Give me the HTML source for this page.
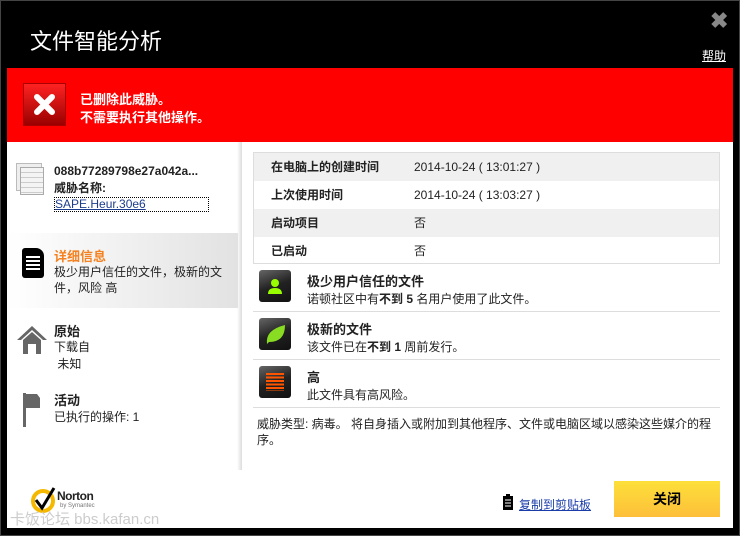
<!DOCTYPE html>
<html><head><meta charset="utf-8"><style>
*{margin:0;padding:0;box-sizing:border-box}
body{width:740px;height:536px;background:#000;font-family:"Liberation Sans","Noto Sans CJK SC",sans-serif;position:relative;overflow:hidden;font-size:12px;color:#222}
.a{position:absolute}
.r{height:28px;position:relative;line-height:28px}
.r b{position:absolute;left:17px;top:0}
.r span{position:absolute;left:160px;top:0}
</style></head><body>
<div class="a" style="left:0;top:0;width:740px;height:536px;border:1px solid #444"></div>
<div class="a" style="left:30px;top:24px;color:#fff;font-size:22px;font-family:'Noto Sans CJK SC',sans-serif">文件智能分析</div>
<div class="a" style="left:710px;top:8px;color:#888;font-size:22px;font-weight:bold">✖</div>
<div class="a" style="left:702px;top:47px;color:#fff;font-size:12px;text-decoration:underline">帮助</div>
<div class="a" style="left:7px;top:68px;width:726px;height:74px;background:#f00"></div>
<div class="a" style="left:23px;top:83px;height:43px;background:linear-gradient(#f22,#900);border:1px solid #a00;width:43px"></div>
<svg class="a" style="left:23px;top:83px" width="43" height="43"><path d="M14 14 L29 29 M29 14 L14 29" stroke="#fff" stroke-width="6" stroke-linecap="round"/></svg>
<div class="a" style="left:80px;top:91px;color:#fff;font-weight:bold;font-size:13px;line-height:18px">已删除此威胁。<br>不需要执行其他操作。</div>
<div class="a" style="left:7px;top:142px;width:726px;height:386px;background:#fff"></div>
<div class="a" style="left:237px;top:142px;width:5px;height:328px;background:linear-gradient(90deg,#fff,#ddd)"></div>
<div class="a" style="left:7px;top:233px;width:231px;height:75px;background:linear-gradient(90deg,#fff,#e2e2e2)"></div>
<div class="a" style="left:16px;top:163px;width:26px;height:28px;border:1px solid #bbb;background:#eee"></div>
<div class="a" style="left:20px;top:167px;width:24px;height:28px;border:1px solid #aaa;background:repeating-linear-gradient(#f4f4f4 0 4px,#ccc 4px 5px)"></div>
<div class="a" style="left:54px;top:163px;font-weight:bold;line-height:17px">088b77289798e27a042a...<br>威胁名称:</div>
<div class="a" style="left:54px;top:197px;width:155px;height:15px;border:1px dotted #000;color:#1c3c8c;text-decoration:underline;line-height:13px">SAPE.Heur.30e6</div>
<div class="a" style="left:22px;top:248px;width:22px;height:30px;background:#000;border-radius:3px 8px 3px 3px"></div>
<div class="a" style="left:26px;top:256px;width:14px;height:14px;background:repeating-linear-gradient(#fff 0 2px,#000 2px 4px)"></div>
<div class="a" style="left:54px;top:246px;color:#f58220;font-weight:bold;font-size:13px">详细信息</div>
<div class="a" style="left:54px;top:264px;line-height:16px;width:175px">极少用户信任的文件，极新的文件，风险 高</div>
<svg class="a" style="left:16px;top:324px" width="32" height="30"><path d="M1 16 L16 2 L31 16 L27 16 L16 6 L5 16Z" fill="#666"/><path d="M7 16 L16 8 L25 16 V30 H20 V20 H12 V30 H7Z" fill="#666"/></svg>
<div class="a" style="left:54px;top:321px;font-weight:bold;font-size:13px">原始</div>
<div class="a" style="left:54px;top:339px;line-height:17px">下载自<br>&nbsp;未知</div>
<svg class="a" style="left:22px;top:393px" width="24" height="34"><rect x="1" y="0" width="3" height="34" fill="#666"/><path d="M4 1 H15 L18 5 V15 H4Z" fill="#666"/></svg>
<div class="a" style="left:54px;top:390px;font-weight:bold;font-size:13px">活动</div>
<div class="a" style="left:54px;top:408px">已执行的操作: 1</div>
<div class="a" style="left:253px;top:152px;width:467px;height:112px;border:1px solid #ddd;font-size:12px">
<div class="r" style="background:#f0f0f0"><b>在电脑上的创建时间</b><span>2014-10-24 ( 13:01:27 )</span></div>
<div class="r"><b>上次使用时间</b><span>2014-10-24 ( 13:03:27 )</span></div>
<div class="r" style="background:#f0f0f0"><b>启动项目</b><span>否</span></div>
<div class="r"><b>已启动</b><span>否</span></div>
</div>
<div class="a" style="left:253px;top:311px;width:467px;height:1px;background:#ddd"></div>
<div class="a" style="left:253px;top:359px;width:467px;height:1px;background:#ddd"></div>
<div class="a" style="left:253px;top:407px;width:467px;height:1px;background:#ddd"></div>
<div class="a" style="left:259px;top:270px;width:32px;height:32px;border-radius:3px;background:linear-gradient(160deg,#666,#222 50%,#111)"></div>
<svg class="a" style="left:259px;top:270px" width="32" height="32"><circle cx="16" cy="13" r="4" fill="#9f0"/><path d="M9 24 Q9 18 16 18 Q23 18 23 24Z" fill="#9f0"/></svg>
<div class="a" style="left:259px;top:318px;width:32px;height:32px;border-radius:3px;background:linear-gradient(160deg,#666,#222 50%,#111)"></div>
<svg class="a" style="left:259px;top:318px" width="32" height="32"><path d="M8 26 Q6 12 26 7 Q26 24 10 24Z" fill="#8d2"/></svg>
<div class="a" style="left:259px;top:366px;width:32px;height:32px;border-radius:3px;background:linear-gradient(160deg,#666,#222 50%,#111)"></div>
<div class="a" style="left:266px;top:373px;width:18px;height:18px;background:repeating-linear-gradient(#f50 0 2px,transparent 2px 3.5px)"></div>
<div class="a" style="left:307px;top:271px;font-weight:bold;font-size:13px">极少用户信任的文件</div>
<div class="a" style="left:307px;top:290px">诺顿社区中有<b>不到 5</b> 名用户使用了此文件。</div>
<div class="a" style="left:307px;top:319px;font-weight:bold;font-size:13px">极新的文件</div>
<div class="a" style="left:307px;top:338px">该文件已在<b>不到 1</b> 周前发行。</div>
<div class="a" style="left:307px;top:367px;font-weight:bold;font-size:13px">高</div>
<div class="a" style="left:307px;top:386px">此文件具有高风险。</div>
<div class="a" style="left:257px;top:416px;width:465px;line-height:16px">威胁类型: 病毒。 将自身插入或附加到其他程序、文件或电脑区域以感染这些媒介的程序。</div>
<svg class="a" style="left:30px;top:486px" width="28" height="28"><circle cx="13" cy="15" r="10" fill="none" stroke="#f5b800" stroke-width="4"/><path d="M6 14 L12 22 L24 2" fill="none" stroke="#000" stroke-width="3"/></svg>
<div class="a" style="left:57px;top:489px;font-weight:bold;font-size:12px;letter-spacing:-.5px">Norton</div>
<div class="a" style="left:60px;top:503px;font-size:6px;color:#777">by Symantec</div>
<div class="a" style="left:10px;top:508px;font-size:15px;color:#ccc">卡饭论坛 bbs.kafan.cn</div>
<svg class="a" style="left:502px;top:494px" width="12" height="17"><rect x="1" y="2" width="10" height="14" fill="#000"/><rect x="4" y="0" width="4" height="3" fill="#000"/><path d="M3 6h6M3 9h6M3 12h6" stroke="#fff"/></svg>
<div class="a" style="left:519px;top:496px;color:#1a3ca8;text-decoration:underline">复制到剪贴板</div>
<div class="a" style="left:614px;top:481px;width:106px;height:36px;background:linear-gradient(#fde03a,#fdbf3a);text-align:center;line-height:36px;font-weight:bold;font-size:14px;color:#000">关闭</div>
</body></html>
